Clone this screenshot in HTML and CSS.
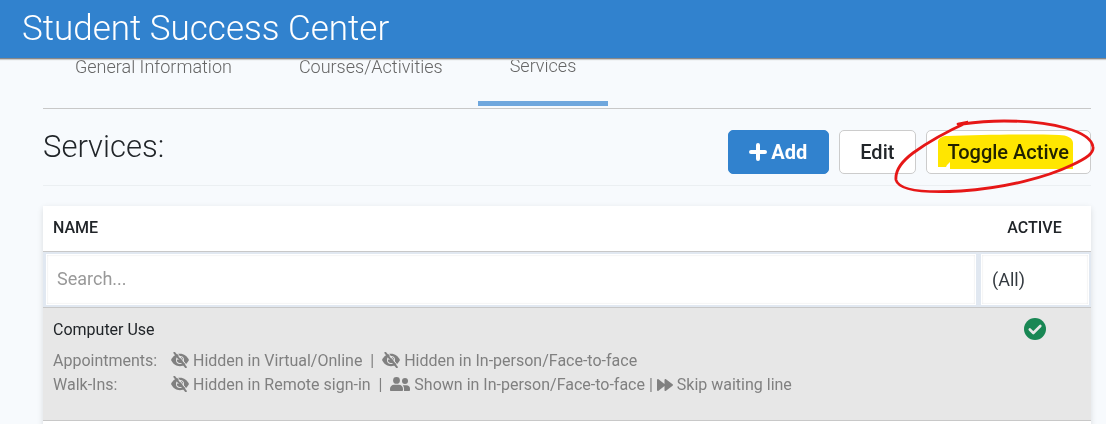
FILE: index.html
```html
<!DOCTYPE html>
<html lang="en">
<head>
    <meta charset="UTF-8">
    <meta name="viewport" content="width=device-width, initial-scale=1.0">
    <title>Student Success Center</title>
    <link rel="stylesheet" href="styles.css">
</head>
<body>
    <!-- shared icons -->
    <svg class="icon-defs" aria-hidden="true">
        <symbol id="icon-hidden" viewBox="0 0 18 16">
            <mask id="slash-mask">
                <rect width="18" height="16" fill="#fff"/>
                <path d="M4.500-1 16.500 14.500" stroke="#000" stroke-width="1"/>
            </mask>
            <g mask="url(#slash-mask)">
                <path fill="currentColor" fill-rule="evenodd" d="M0 8C1.800 4.200 5 1.800 9 1.800S16.200 4.200 18 8c-1.800 3.800-5 6.200-9 6.200S1.800 11.800 0 8zm9-4a4 4 0 1 0 0 8 4 4 0 0 0 0-8z"/>
                <path fill="currentColor" d="M9 5a3 3 0 1 1-2.900 2.300A1.700 1.700 0 0 0 9 5z"/>
            </g>
            <path d="M3.400.9 14.800 15.100" stroke="currentColor" stroke-width="2" stroke-linecap="round"/>
        </symbol>
        <symbol id="icon-users" viewBox="0 0 20 14">
            <g fill="currentColor">
                <circle cx="6.500" cy="3.400" r="3.400"/>
                <circle cx="15" cy="4" r="3"/>
                <path d="M0 13v-1.200c0-2.300 1.800-4 4-4h5c2.200 0 4 1.700 4 4V13c0 .600-.400 1-1 1H1c-.600 0-1-.400-1-1z"/>
                <path d="M14 14v-2.200c0-1.400-.500-2.600-1.300-3.500h3.800c2 0 3.500 1.500 3.500 3.500V13c0 .600-.400 1-1 1z"/>
            </g>
        </symbol>
        <symbol id="icon-skip" viewBox="0 0 16 12">
            <path fill="currentColor" d="M0 1C0 .200.800-.200 1.500.300L7.500 5V1C7.500.200 8.400-.200 9 .300l6.600 5c.500.400.500 1 0 1.400l-6.600 5c-.600.500-1.500.100-1.500-.700V7l-6 4.700C.800 12.200 0 11.800 0 11z"/>
        </symbol>
    </svg>

    <header class="app-header">
        <h1>Student Success Center</h1>
    </header>

    <main class="content">
        <nav class="tabs">
            <a href="#general">General Information</a>
            <a href="#courses">Courses/Activities</a>
            <a href="#services" class="active">Services</a>
        </nav>

        <div class="toolbar">
            <h2>Services:</h2>
            <div class="actions">
                <button type="button" class="btn btn-primary">
                    <svg width="18" height="18" viewBox="0 0 18 18" aria-hidden="true"><path d="M9 2v14M2 9h14" stroke="currentColor" stroke-width="4" stroke-linecap="round"/></svg>
                    Add
                </button>
                <button type="button" class="btn">Edit</button>
                <div class="marked">
                    <button type="button" class="btn">Toggle Active</button>
                    <svg class="highlight" width="220" height="86" viewBox="0 0 220 86" aria-hidden="true">
                        <path fill="#ffe600" d="M52 27c1-3 5-5 9-5 34-1 78-2 112-1 8 0 14 3 14 8v26H64v-7l-3 3-1 2h-8z"/>
                    </svg>
                    <svg class="circle" width="220" height="86" viewBox="0 0 220 86" aria-hidden="true">
                        <path fill="none" stroke="#e61717" stroke-width="2.800" stroke-linecap="round" d="M72 10l10-2C62 17 42 28 27 39 15 48 9 57 10 66c3 11 31 13 65 11 45-3 86-14 111-26 15-7 22-12 21-18C205 17 166 7 118 7q-20 0-42 3"/>
                    </svg>
                </div>
            </div>
        </div>

        <table class="grid">
            <thead>
                <tr>
                    <th scope="col">NAME</th>
                    <th scope="col" class="col-active">ACTIVE</th>
                </tr>
                <tr class="filters">
                    <td><input type="text" placeholder="Search..." aria-label="Search name"></td>
                    <td>
                        <select aria-label="Filter active">
                            <option>(All)</option>
                            <option>Yes</option>
                            <option>No</option>
                        </select>
                    </td>
                </tr>
            </thead>
            <tbody>
                <tr class="selected">
                    <td>
                        <div class="service-name">Computer Use</div>
                        <dl class="visibility">
                            <dt>Appointments:</dt>
                            <dd>
                                <svg class="icon-eye"><use href="#icon-hidden"/></svg> Hidden in Virtual/Online &nbsp;|&nbsp;
                                <svg class="icon-eye"><use href="#icon-hidden"/></svg> Hidden in In-person/Face-to-face
                            </dd>
                            <dt>Walk-Ins:</dt>
                            <dd>
                                <svg class="icon-eye"><use href="#icon-hidden"/></svg> Hidden in Remote sign-in &nbsp;|&nbsp;
                                <svg class="icon-users"><use href="#icon-users"/></svg> Shown in In-person/Face-to-face |
                                <svg class="icon-skip"><use href="#icon-skip"/></svg> Skip waiting line
                            </dd>
                        </dl>
                    </td>
                    <td class="status">
                        <svg width="22" height="22" viewBox="0 0 22 22" role="img" aria-label="Active"><circle cx="11" cy="11" r="11" fill="#198754"/><path d="M5.800 11.500l3.500 3.500 7-7" fill="none" stroke="#e7e7e7" stroke-width="2.600" stroke-linecap="round" stroke-linejoin="round"/></svg>
                    </td>
                </tr>
                <tr>
                    <td></td>
                    <td></td>
                </tr>
            </tbody>
        </table>
    </main>
</body>
</html>
```
FILE: styles.css
```css
* {
  box-sizing: border-box;
}

body {
  margin: 0;
  background: #f7fafd;
  color: #212529;
  font-family: Roboto, "Liberation Sans", sans-serif;
  font-size: 16px;
  line-height: 24px;
  overflow: hidden;
}

.icon-defs {
  position: absolute;
  width: 0;
  height: 0;
}

.app-header {
  position: sticky;
  top: 0;
  z-index: 10;
  padding: 7px 22px;
  background: #3182ce;
  border-bottom: 1px solid #888;
  box-shadow: 0 1px 1px #ccc;
}

.app-header h1 {
  margin: 0;
  color: #fff;
  font-size: 35px;
  font-weight: 300;
  line-height: 44px;
}

.content {
  padding: 0 15px 0 43px;
}

.tabs {
  display: flex;
  gap: 3px;
  margin-top: -10px;
  border-bottom: 1px solid #c8c8c8;
}

.tabs a {
  height: 57px;
  padding: 6px 32px 0;
  color: #666;
  font-size: 18px;
  font-weight: 300;
  text-decoration: none;
}

.tabs a.active {
  padding-top: 5px;
  margin-bottom: 2px;
  border-bottom: 5px solid #6fa7dd;
}

.toolbar {
  display: flex;
  justify-content: space-between;
  padding: 21px 0 11px;
  margin-bottom: 20px;
  border-bottom: 1px solid #ebeff2;
}

.toolbar h2 {
  margin: 0;
  font-size: 31px;
  font-weight: 300;
  line-height: 34px;
}

.actions {
  display: flex;
  gap: 10px;
}

.btn {
  display: flex;
  align-items: center;
  gap: 4px;
  height: 44px;
  padding: 0 21px 0 20px;
  border: 1px solid #ccc;
  border-radius: 5px;
  background: #fff;
  color: #212529;
  font-family: inherit;
  font-size: 20px;
  font-weight: 500;
  white-space: nowrap;
}

.btn-primary {
  border-color: #3182ce;
  background: #3182ce;
  color: #fff;
  font-weight: 700;
}

.marked {
  position: relative;
}

.highlight,
.circle {
  position: absolute;
  top: -16px;
  left: -40px;
  pointer-events: none;
}

.highlight {
  mix-blend-mode: multiply;
}

.grid {
  width: 100%;
  border-collapse: separate;
  border-spacing: 0;
  background: #fff;
  box-shadow: 0 2px 6px rgba(0, 0, 0, 0.12);
}

.grid th,
.grid td {
  padding: 10px;
  border-bottom: 1px solid #c8c8c8;
  text-align: left;
  vertical-align: top;
}

.grid th {
  height: 46px;
  font-weight: 500;
}

.grid .col-active {
  width: 113px;
  text-align: center;
}

.grid .filters td {
  padding: 2px 2px 2px 3px;
  background: #e1e8f1;
}

.filters input,
.filters select {
  display: block;
  width: 100%;
  height: 51px;
  padding: 0 10px;
  border: 1px solid #fff;
  border-radius: 0;
  background: #fff;
  box-shadow: inset 0 0 2px #ddd;
  color: #343a40;
  font-family: inherit;
  font-size: 18px;
  appearance: none;
}

.filters input {
  padding: 0 10px 2px;
}

.filters input::placeholder {
  color: #999;
}

.selected td {
  height: 113px;
  background: #e7e7e7;
}

.service-name {
  margin-bottom: 7px;
}

.visibility {
  display: grid;
  grid-template-columns: 118px 1fr;
  margin: 0;
  color: #808080;
}

.visibility dd {
  margin: 0;
}

.visibility svg {
  vertical-align: -2px;
}

.icon-eye {
  width: 18px;
  height: 16px;
}

.visibility .icon-users {
  width: 20px;
  height: 14px;
  vertical-align: -1px;
}

.visibility .icon-skip {
  width: 16px;
  height: 12px;
  vertical-align: -1px;
}

.grid .status {
  text-align: center;
}
```
